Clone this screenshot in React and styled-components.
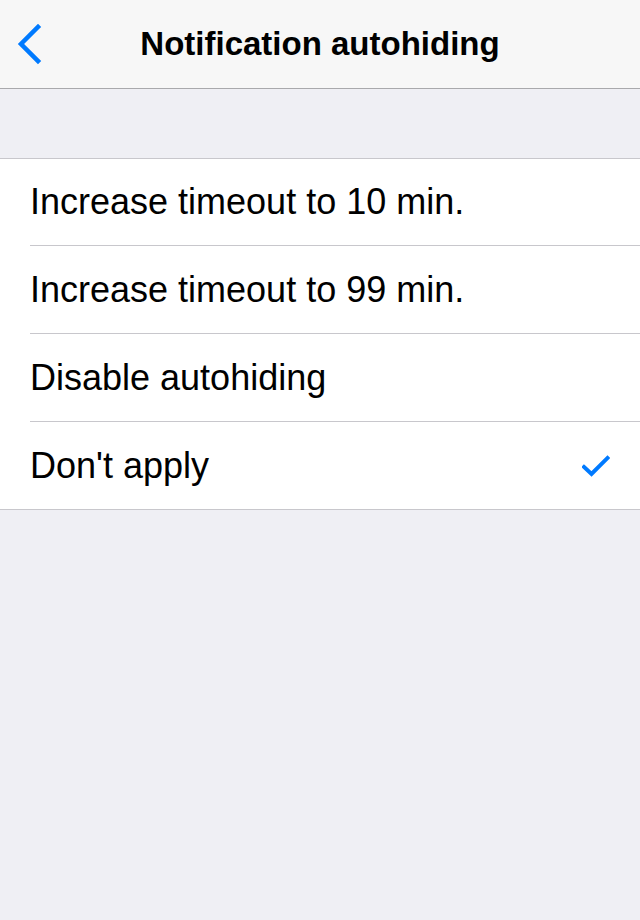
import React from "react";
import styled, { createGlobalStyle } from "styled-components";

const Global = createGlobalStyle`
  html, body { margin: 0; padding: 0; }
  body { background: #efeff4; font-family: "Liberation Sans", Arial, sans-serif; }
`;

const Page = styled.div`
  width: 640px;
  height: 920px;
  background: #efeff4;
  display: flex;
  flex-direction: column;
`;

const NavBar = styled.header`
  height: 89px;
  box-sizing: border-box;
  background: #f7f7f7;
  border-bottom: 1px solid #a9a9ac;
  display: grid;
  grid-template-columns: 80px 1fr 80px;
  align-items: center;
`;

const BackButton = styled.button`
  background: none;
  border: none;
  padding: 0 0 0 13px;
  height: 100%;
  display: flex;
  align-items: center;
  cursor: pointer;
`;

const Title = styled.h1`
  margin: 0;
  text-align: center;
  font-size: 33px;
  font-weight: 700;
  color: #000;
`;

const Spacer = styled.div`
  height: 69px;
`;

const List = styled.ul`
  list-style: none;
  margin: 0;
  padding: 0 0 0 30px;
  background: #fff;
  border-top: 1px solid #c8c7cc;
  border-bottom: 1px solid #c8c7cc;
`;

const Row = styled.li`
  height: ${(p) => (p.$first ? "86px" : "87px")};
  display: flex;
  align-items: center;
  justify-content: space-between;
  padding-right: 30px;
  border-bottom: ${(p) => (p.$last ? "none" : "1px solid #c8c7cc")};
  font-size: 36px;
  color: #000;
`;

const Chevron = () => (
  <svg width="30" height="44" viewBox="0 0 30 44">
    <path d="M25 5 L8 22 L25 39" fill="none" stroke="#007aff" strokeWidth="4.5" strokeLinecap="square" />
  </svg>
);

const Check = () => (
  <svg width="28" height="22" viewBox="0 0 28 22">
    <path d="M2 12 L9.5 19 L25.5 3" fill="none" stroke="#007aff" strokeWidth="4" strokeLinecap="square" />
  </svg>
);

const options = [
  "Increase timeout to 10 min.",
  "Increase timeout to 99 min.",
  "Disable autohiding",
  "Don't apply",
];

export default function App() {
  return (
    <Page>
      <Global />
      <NavBar>
        <BackButton aria-label="Back">
          <Chevron />
        </BackButton>
        <Title>Notification autohiding</Title>
        <div />
      </NavBar>
      <Spacer />
      <List>
        {options.map((o, i) => (
          <Row key={o} $first={i === 0} $last={i === options.length - 1}>
            <span>{o}</span>
            {i === 3 && <Check />}
          </Row>
        ))}
      </List>
    </Page>
  );
}
